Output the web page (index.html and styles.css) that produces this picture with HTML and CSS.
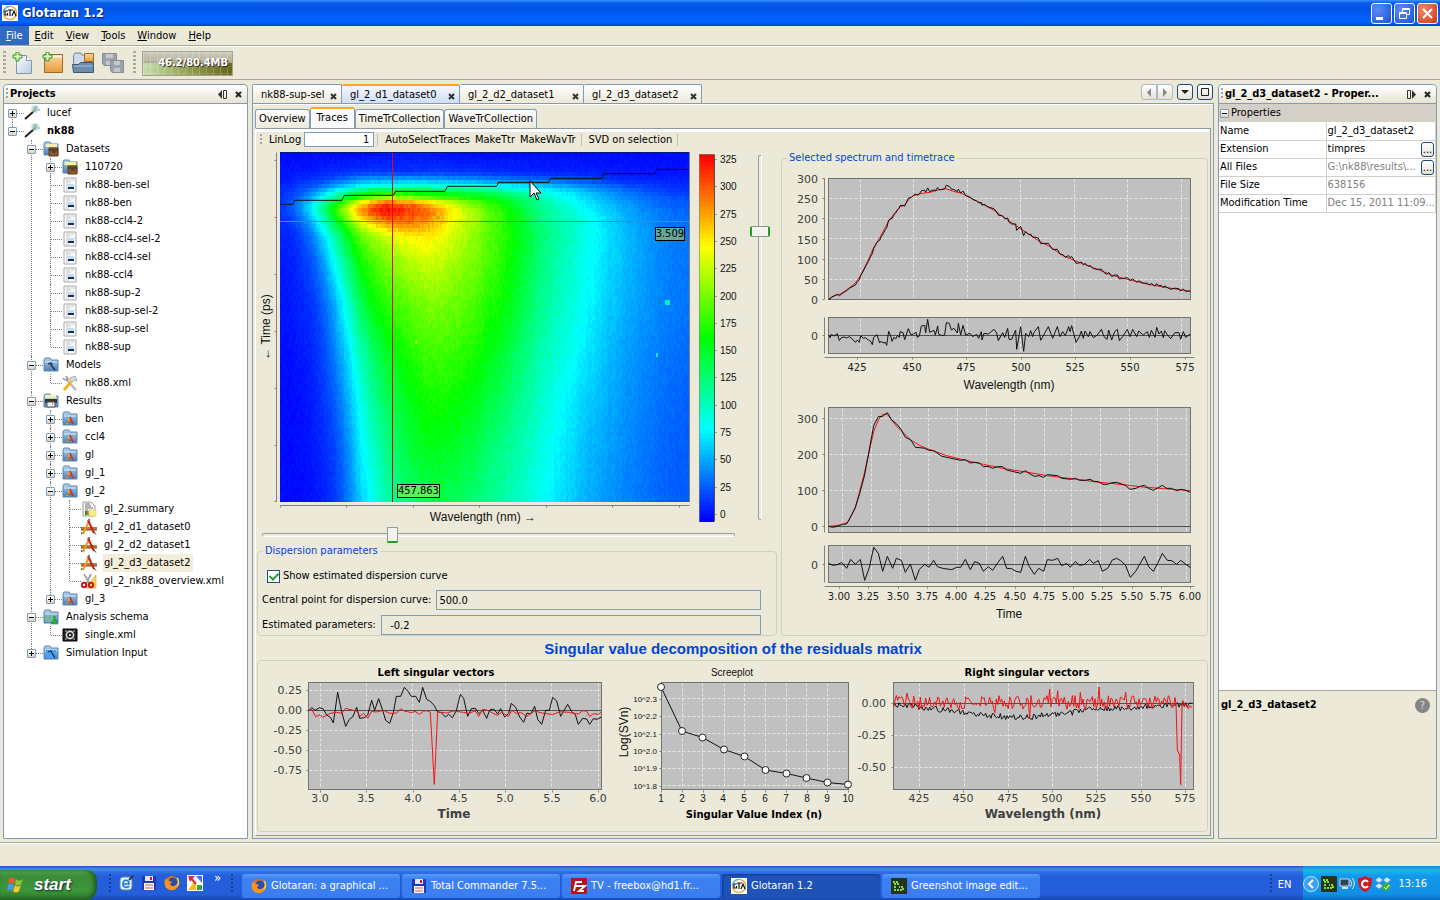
FILE: index.html
```html
<!DOCTYPE html>
<html lang="en">
<head>
    <meta charset="UTF-8">
    <meta name="viewport" content="width=device-width, initial-scale=1.0">
    <title>Glotaran 1.2</title>
    <link rel="stylesheet" href="styles.css">
</head>
<body>
    <!-- Icons shared by the tree, the toolbar and the taskbar -->
    <svg class="defs" width="0" height="0" aria-hidden="true">
        <defs>
            <linearGradient id="g-folder" x1="0" y1="0" x2="0" y2="1"><stop offset="0" stop-color="#b4d2ee"/><stop offset="1" stop-color="#4a7fb5"/></linearGradient>
            <radialGradient id="g-glow"><stop offset="0" stop-color="#f9a8e8"/><stop offset=".5" stop-color="#a8e8b8"/><stop offset="1" stop-color="#b8c8ff" stop-opacity="0"/></radialGradient>
            <linearGradient id="g-orange" x1="0" y1="0" x2="0" y2="1"><stop offset="0" stop-color="#fbd9a2"/><stop offset="1" stop-color="#e89a3c"/></linearGradient>
            <linearGradient id="g-page" x1="0" y1="0" x2="1" y2="1"><stop offset="0" stop-color="#fff"/><stop offset="1" stop-color="#b9cbdd"/></linearGradient>
        </defs>
        <symbol id="i-wand" viewBox="0 0 16 16"><circle cx="11" cy="4" r="5" fill="url(#g-glow)"/><path d="M1 14 9 7" stroke="#222" stroke-width="2"/><path d="m9 7 3-3" stroke="#999" stroke-width="2"/><path d="M12 1v2M14 5h2M10 2l1 1" stroke="#6ad"/></symbol>
        <symbol id="i-base" viewBox="0 0 16 16"><path d="M1 3 2 1h5l1 2h7v11H1z" fill="url(#g-folder)" stroke="#5b87b3"/><path d="M2 5h12" stroke="#d5e6f6"/></symbol>
        <symbol id="i-data" viewBox="0 0 16 16"><use href="#i-base"/><path d="M3 3h11v3H3z" fill="#f5eeb0"/><path d="M6 7h9v8H6z" fill="#8a5a32" stroke="#5e3818"/><path d="M6 9h9M9 11h4" stroke="#3d2410"/></symbol>
        <symbol id="i-models" viewBox="0 0 16 16"><use href="#i-base"/><path d="m5 7 3-1 1 1-1 1 4 5" stroke="#234" stroke-width="1.4" fill="none"/></symbol>
        <symbol id="i-results" viewBox="0 0 16 16"><use href="#i-base"/><path d="M2 2h11v3H2z" fill="#f5eeb0"/><path d="M2 6h12v4H2z" fill="#333"/><path d="M4 9h8v5H4z" fill="#eee" stroke="#555"/><path d="M9 11h1" stroke="#e22"/></symbol>
        <symbol id="i-result" viewBox="0 0 16 16"><use href="#i-base"/><path d="m5 13 3-6" stroke="#f6a21c" stroke-width="1.6"/><path d="m8 6 3 7" stroke="#d22" stroke-width="1.6"/><path d="M5 11h6" stroke="#a52"/></symbol>
        <symbol id="i-schema" viewBox="0 0 16 16"><use href="#i-base"/><path d="M2 6h7l3 3v4H2z" fill="#76b7a0"/><path d="M12 7v3l3 5H8l3-5V7z" fill="#25b43a" stroke="#188a28" stroke-width=".6"/></symbol>
        <symbol id="i-sim" viewBox="0 0 16 16"><use href="#i-base"/><path d="M3 5h10v8H3z" fill="#4aa0f4"/><path d="m5 7 3-1 1 2 3 5" stroke="#134" stroke-width="1.3" fill="none"/></symbol>
        <symbol id="i-file" viewBox="0 0 16 16"><path d="M2 1h12v14H2z" fill="#fafafa" stroke="#a8a8a8"/><path d="M4 3h4M9 3h3M4 5h5M4 7h2M4 9h2M4 11h2M4 13h3" stroke="#c4c4c4"/><path d="M6 7h6v5H6z" fill="#bcdcf8"/><path d="M6 10h6v2H6z" fill="#10305a"/></symbol>
        <symbol id="i-tools" viewBox="0 0 16 16"><path d="m4 4 10 11" stroke="#b5b5b5" stroke-width="2.4"/><path d="M1 3c2 3 3 2 5 1L4 1" stroke="#999" stroke-width="1.6" fill="none"/><path d="m2 15 7-8" stroke="#f0b428" stroke-width="3"/><path d="m8 3 5-2 2 5-2-1-3 2-2-2z" fill="#ddd" stroke="#888" stroke-width=".7"/></symbol>
        <symbol id="i-summary" viewBox="0 0 16 16"><path d="M2 1h8l4 4v10H2z" fill="#f4f4f4" stroke="#999"/><path d="M4 3h5M4 5h6M4 7h8M4 9h3" stroke="#777"/><path d="M4 10h4v4H4z" fill="#e07818"/><path d="M4 10h2v4H4z" fill="#298a30"/><path d="M8 9h7v6H8z" fill="#fbf08a" stroke="#d8c850" stroke-width=".6"/></symbol>
        <symbol id="i-plot" viewBox="0 0 16 16"><path d="M0 8h16v3H0z" fill="#b27a3c"/><path d="M0 11h16" stroke="#7e5122"/><path d="m8 2-6 13" stroke="#f19a1b" stroke-width="2"/><path d="m7 1 6 13" stroke="#c81e1e" stroke-width="2"/><path d="m1 13-.5 2M13 13l2 2.5" stroke="#333"/><path d="M7 1h2" stroke="#777" stroke-width="2"/></symbol>
        <symbol id="i-cut" viewBox="0 0 16 16"><path d="M15 2v13H5z" fill="#f8d95a" stroke="#d0a520" stroke-width=".7"/><path d="M3 1 9 11M10 1 5 11" stroke="#aaa" stroke-width="2"/><circle cx="3" cy="12" r="2.2" fill="none" stroke="#d01818" stroke-width="2"/><circle cx="10" cy="12" r="2.2" fill="none" stroke="#d01818" stroke-width="2"/></symbol>
        <symbol id="i-single" viewBox="0 0 16 16"><path d="M1 2h14v12H1z" fill="#222" stroke="#000"/><circle cx="8" cy="8" r="3.6" fill="none" stroke="#ddd" stroke-width="1.6"/><circle cx="8" cy="8" r="1" fill="#fff"/><path d="M3 4h2M11 4h2M3 12h2M11 12h2" stroke="#bbb"/></symbol>
        <symbol id="i-glo" viewBox="0 0 16 16"><path d="M0 0h16v16H0z" fill="#fff"/><circle cx="8" cy="8" r="6.6" fill="none" stroke="#e8a83c" stroke-width="1.4"/><path d="M8 1.4A6.6 6.6 0 0 0 1.4 8" stroke="#5ab4d8" stroke-width="1.4" fill="none"/><path d="M6 6H3v4h2.500V8M6 5h5M8 5v6M10 11l2-5 2 5" stroke="#111" stroke-width="1.2" fill="none"/></symbol>
        <symbol id="i-fox" viewBox="0 0 16 16"><circle cx="8" cy="8" r="7" fill="#e8701a"/><circle cx="9" cy="7" r="4.500" fill="#2b4fa8"/><path d="M1 4c1 0 3 1 4 2l3 1-2 2c1 3 5 3 8-1 1 5-4 8-8 7C1 14 0 9 1 4z" fill="#f89420"/><path d="M13 3c2 2 2 6 0 8" stroke="#fbd23c" fill="none" stroke-width="1.5"/></symbol>
        <symbol id="i-disk" viewBox="0 0 16 16"><path d="M1 1h14v14H1z" fill="#2038b8"/><path d="M4 1h8v5H4z" fill="#dfe6f8"/><path d="M9 2h2v3H9z" fill="#c81e28"/><path d="M3 8h10v7H3z" fill="#fff"/><path d="M4 10h8M4 13h8" stroke="#e04848"/></symbol>
        <symbol id="i-fz" viewBox="0 0 16 16"><path d="M0 0h16v16H0z" fill="#b5121b"/><path d="m3 13 2-9h6M4 8h5M9 8h5l-6 5h5" stroke="#fff" stroke-width="1.8" fill="none"/></symbol>
        <symbol id="i-shot" viewBox="0 0 16 16"><path d="M0 0h16v16H0z" fill="#26331f"/><path d="M2 4h5v2H4v6h8V9H8" stroke="#7fe03a" stroke-width="2" fill="none" stroke-dasharray="2 1"/></symbol>
        <symbol id="i-ie" viewBox="0 0 16 16"><rect x="2" y="2" width="12" height="13" rx="3" fill="#e8f2fc" stroke="#58a"/><path d="M5 9h6c0-5-6-5-6 0 0 4 5 4 6 2" stroke="#1a78d8" stroke-width="1.7" fill="none"/><path d="m11 5 4-4" stroke="#333" stroke-width="2"/></symbol>
        <symbol id="i-quad" viewBox="0 0 16 16"><path d="M0 0h16v16H0z" fill="#fff"/><path d="M1 1h7L3 7z" fill="#d82878"/><path d="M9 1h6v7z" fill="#3b70e8"/><path d="m1 15 6-8 2 3v5z" fill="#f0c020"/><path d="M10 10h5v5h-5z" fill="#2fa838"/><path d="m3 2 6 7" stroke="#e02828" stroke-width="2"/></symbol>
    </svg>

    <header class="titlebar">
        <svg class="icon"><use href="#i-glo"/></svg>
        <h1>Glotaran 1.2</h1>
        <div class="win-buttons">
            <button class="win-button" aria-label="Minimize"><svg width="19" height="19"><path d="M4 13h7v3H4z" fill="#fff"/></svg></button>
            <button class="win-button" aria-label="Restore"><svg width="19" height="19" fill="none" stroke="#fff"><path d="M4.500 8.500h7v6h-7zM4 9.500h8M7.500 8V4.500h7v6H12M7 5.500h8"/></svg></button>
            <button class="win-button close" aria-label="Close"><svg width="19" height="19" stroke="#fff" stroke-width="2"><path d="m5 5 9 9M14 5l-9 9"/></svg></button>
        </div>
    </header>

    <nav class="menubar">
        <button class="active"><u>F</u>ile</button>
        <button><u>E</u>dit</button>
        <button><u>V</u>iew</button>
        <button><u>T</u>ools</button>
        <button><u>W</u>indow</button>
        <button><u>H</u>elp</button>
    </nav>

    <div class="toolbar">
        <i class="grip"></i>
        <button class="tool" aria-label="New file"><svg width="22" height="22"><path d="M4.500 3.500h10l5 5v13h-15z" fill="url(#g-page)" stroke="#8298ae"/><path d="M14.500 3.500v5h5" fill="#fff" stroke="#8298ae"/><path d="M4 0h3v3h3v3H7v3H4V6H1V3h3z" fill="#dff7c4" stroke="#2b9a1a"/></svg></button>
        <button class="tool" aria-label="New project"><svg width="22" height="22"><path d="M2.500 2.500h18v18h-18z" fill="url(#g-orange)" stroke="#a06a28"/><path d="M3 4.500h17" stroke="#fff3de" stroke-width="2"/><path d="M4 0h3v3h3v3H7v3H4V6H1V3h3z" fill="#dff7c4" stroke="#2b9a1a"/></svg></button>
        <button class="tool" aria-label="Open project"><svg width="22" height="22"><path d="M1.500 3.500 3 1h6l1 2h3v10H1.500z" fill="#cddbe9" stroke="#6a84a0"/><path d="M12.500 1.500h9v8h-9z" fill="url(#g-orange)" stroke="#a06a28"/><path d="M.500 12.500h6l2-2h13v10h-20z" fill="#6b8cad" stroke="#3c5875"/><path d="M1.500 14h19" stroke="#a9c0d8"/></svg></button>
        <button class="tool" aria-label="Save all" disabled><svg width="22" height="22"><path d="M.500 1.500h14v12H2l-1.500-2z" fill="#9ba3ae" stroke="#868e98"/><path d="M4 2h7v4H4zM4 9h7v4H4z" fill="#c3c8cc"/><path d="M8.500 8.500h13v12H10l-1.500-2z" fill="#9ba3ae" stroke="#868e98"/><path d="M12 9h6v4h-6zM12 16h6v4h-6z" fill="#c3c8cc"/></svg></button>
        <i class="grip"></i>
        <button class="memory">46.2/80.4MB</button>
    </div>

    <main class="workspace">
        <!-- Projects tree -->
        <section class="window projects">
            <header class="window-head">
                <i class="grip small"></i>
                <h2>Projects</h2>
                <button class="mini" aria-label="Slide out"><svg width="9" height="9"><path d="M4 0v9L0 4.500z" fill="#333"/><path d="M5.500.500h3v8h-3z" fill="none" stroke="#333"/></svg></button>
                <button class="mini" aria-label="Close"><svg width="7" height="7"><path d="m1 1 5 5M6 1 1 6" stroke="#222" stroke-width="2"/></svg></button>
            </header>
            <ul class="tree">
                <li><div class="node"><button class="toggle plus"></button><svg class="icon"><use href="#i-wand"/></svg><span>lucef</span></div></li>
                <li><div class="node"><button class="toggle"></button><svg class="icon"><use href="#i-wand"/></svg><b>nk88</b></div>
                    <ul>
                        <li><div class="node"><button class="toggle"></button><svg class="icon"><use href="#i-data"/></svg><span>Datasets</span></div>
                            <ul>
                                <li><div class="node"><button class="toggle plus"></button><svg class="icon"><use href="#i-data"/></svg><span>110720</span></div></li>
                                <li><div class="node leaf"><svg class="icon"><use href="#i-file"/></svg><span>nk88-ben-sel</span></div></li>
                                <li><div class="node leaf"><svg class="icon"><use href="#i-file"/></svg><span>nk88-ben</span></div></li>
                                <li><div class="node leaf"><svg class="icon"><use href="#i-file"/></svg><span>nk88-ccl4-2</span></div></li>
                                <li><div class="node leaf"><svg class="icon"><use href="#i-file"/></svg><span>nk88-ccl4-sel-2</span></div></li>
                                <li><div class="node leaf"><svg class="icon"><use href="#i-file"/></svg><span>nk88-ccl4-sel</span></div></li>
                                <li><div class="node leaf"><svg class="icon"><use href="#i-file"/></svg><span>nk88-ccl4</span></div></li>
                                <li><div class="node leaf"><svg class="icon"><use href="#i-file"/></svg><span>nk88-sup-2</span></div></li>
                                <li><div class="node leaf"><svg class="icon"><use href="#i-file"/></svg><span>nk88-sup-sel-2</span></div></li>
                                <li><div class="node leaf"><svg class="icon"><use href="#i-file"/></svg><span>nk88-sup-sel</span></div></li>
                                <li><div class="node leaf"><svg class="icon"><use href="#i-file"/></svg><span>nk88-sup</span></div></li>
                            </ul>
                        </li>
                        <li><div class="node"><button class="toggle"></button><svg class="icon"><use href="#i-models"/></svg><span>Models</span></div>
                            <ul>
                                <li><div class="node leaf"><svg class="icon"><use href="#i-tools"/></svg><span>nk88.xml</span></div></li>
                            </ul>
                        </li>
                        <li><div class="node"><button class="toggle"></button><svg class="icon"><use href="#i-results"/></svg><span>Results</span></div>
                            <ul>
                                <li><div class="node"><button class="toggle plus"></button><svg class="icon"><use href="#i-result"/></svg><span>ben</span></div></li>
                                <li><div class="node"><button class="toggle plus"></button><svg class="icon"><use href="#i-result"/></svg><span>ccl4</span></div></li>
                                <li><div class="node"><button class="toggle plus"></button><svg class="icon"><use href="#i-result"/></svg><span>gl</span></div></li>
                                <li><div class="node"><button class="toggle plus"></button><svg class="icon"><use href="#i-result"/></svg><span>gl_1</span></div></li>
                                <li><div class="node"><button class="toggle"></button><svg class="icon"><use href="#i-result"/></svg><span>gl_2</span></div>
                                    <ul>
                                        <li><div class="node leaf"><svg class="icon"><use href="#i-summary"/></svg><span>gl_2.summary</span></div></li>
                                        <li><div class="node leaf"><svg class="icon"><use href="#i-plot"/></svg><span>gl_2_d1_dataset0</span></div></li>
                                        <li><div class="node leaf"><svg class="icon"><use href="#i-plot"/></svg><span>gl_2_d2_dataset1</span></div></li>
                                        <li><div class="node leaf selected"><svg class="icon"><use href="#i-plot"/></svg><span>gl_2_d3_dataset2</span></div></li>
                                        <li><div class="node leaf"><svg class="icon"><use href="#i-cut"/></svg><span>gl_2_nk88_overview.xml</span></div></li>
                                    </ul>
                                </li>
                                <li><div class="node"><button class="toggle plus"></button><svg class="icon"><use href="#i-result"/></svg><span>gl_3</span></div></li>
                            </ul>
                        </li>
                        <li><div class="node"><button class="toggle"></button><svg class="icon"><use href="#i-schema"/></svg><span>Analysis schema</span></div>
                            <ul>
                                <li><div class="node leaf"><svg class="icon"><use href="#i-single"/></svg><span>single.xml</span></div></li>
                            </ul>
                        </li>
                        <li><div class="node"><button class="toggle plus"></button><svg class="icon"><use href="#i-sim"/></svg><span>Simulation Input</span></div></li>
                    </ul>
                </li>
            </ul>
        </section>

        <!-- Editor area -->
        <section class="editor">
            <div class="doc-tabs">
                <button class="doc-tab first">nk88-sup-sel <svg width="7" height="7"><path d="m1 1 5 5M6 1 1 6"/></svg></button>
                <button class="doc-tab active">gl_2_d1_dataset0 <svg width="7" height="7"><path d="m1 1 5 5M6 1 1 6"/></svg></button>
                <button class="doc-tab wide">gl_2_d2_dataset1 <svg width="7" height="7"><path d="m1 1 5 5M6 1 1 6"/></svg></button>
                <button class="doc-tab">gl_2_d3_dataset2 <svg width="7" height="7"><path d="m1 1 5 5M6 1 1 6"/></svg></button>
                <div class="doc-nav">
                    <button class="nav-button off prev" aria-label="Previous"><svg width="14" height="14"><path d="M9 3v9L5 7.500z" fill="#888"/></svg></button>
                    <button class="nav-button off next" aria-label="Next"><svg width="14" height="14"><path d="M5 3v9l4-4.500z" fill="#888"/></svg></button>
                    <button class="nav-button" aria-label="List"><svg width="14" height="14"><path d="M3 5h8l-4 4z" fill="#222"/></svg></button>
                    <button class="nav-button" aria-label="Maximize"><svg width="14" height="14"><path d="M3.500 3.500h7v7h-7z" fill="none" stroke="#222"/></svg></button>
                </div>
            </div>
            <div class="doc">
                <div class="inner-tabs">
                    <button>Overview</button>
                    <button class="active">Traces</button>
                    <button>TimeTrCollection</button>
                    <button>WaveTrCollection</button>
                </div>
                <div class="pane">
                    <div class="trace-bar">
                        <i class="grip small"></i>
                        <label for="linlog">LinLog</label>
                        <input id="linlog" type="text" value="1">
                        <i class="sep"></i>
                        <button>AutoSelectTraces</button>
                        <button>MakeTtr</button>
                        <button>MakeWavTr</button>
                        <i class="sep"></i>
                        <button>SVD on selection</button>
                        <i class="sep"></i>
                    </div>

                    <div class="columns">
                        <div class="left">
                            <div class="heat">
                                <svg class="heat-y" viewBox="0 0 24 350" id="heat-y"></svg>
                                <div class="heat-plot">
                                    <canvas id="heatmap" width="409" height="350"></canvas>
                                    <svg class="overlay" viewBox="0 0 409 350" preserveAspectRatio="none" id="heat-lines"></svg>
                                    <span class="marker time">3.509</span>
                                    <span class="marker wave">457.863</span>
                                    <svg class="cursor" width="13" height="21"><path d="M1 1v16l4-4 3 7 2-1-3-6h5z" fill="#fff" stroke="#000"/></svg>
                                </div>
                                <svg class="heat-x" viewBox="0 0 410 24" id="heat-x"></svg>
                                <svg class="colorbar" viewBox="0 0 60 374" id="colorbar"></svg>
                                <input class="range-v" type="range" min="0" max="100" value="20" aria-label="Time">
                            </div>
                            <input class="range-h" type="range" min="0" max="100" value="27" aria-label="Wavelength">
                            <fieldset class="dispersion">
                                <legend>Dispersion parameters</legend>
                                <div class="row check">
                                    <input type="checkbox" id="show-curve" checked>
                                    <label for="show-curve">Show estimated dispersion curve</label>
                                </div>
                                <div class="row">
                                    <label for="central">Central point for dispersion curve:</label>
                                    <input type="text" id="central" value="500.0">
                                </div>
                                <div class="row">
                                    <label for="estimated">Estimated parameters:</label>
                                    <input type="text" id="estimated" value="  -0.2">
                                </div>
                            </fieldset>
                        </div>
                        <fieldset class="selected-traces">
                            <legend>Selected spectrum and timetrace</legend>
                            <svg class="chart" viewBox="0 0 425 230" id="spectrum"></svg>
                            <svg class="chart" viewBox="0 0 425 230" id="timetrace"></svg>
                        </fieldset>
                    </div>

                    <h3>Singular value decomposition of the residuals matrix</h3>
                    <div class="svd">
                        <svg class="chart" viewBox="0 0 356 168" id="left-svd"></svg>
                        <svg class="chart" viewBox="0 0 240 168" id="scree"></svg>
                        <svg class="chart" viewBox="0 0 353 168" id="right-svd"></svg>
                    </div>
                </div>
            </div>
        </section>

        <!-- Properties -->
        <section class="window properties">
            <header class="window-head">
                <i class="grip small"></i>
                <h2>gl_2_d3_dataset2 - Proper...</h2>
                <button class="mini" aria-label="Slide out"><svg width="9" height="9"><path d="M5 0v9l4-4.500z" fill="#333"/><path d="M.500.500h3v8h-3z" fill="none" stroke="#333"/></svg></button>
                <button class="mini" aria-label="Close"><svg width="7" height="7"><path d="m1 1 5 5M6 1 1 6" stroke="#222" stroke-width="2"/></svg></button>
            </header>
            <div class="prop-group"><button class="toggle"></button>Properties</div>
            <table>
                <tr><th>Name</th><td>gl_2_d3_dataset2</td></tr>
                <tr><th>Extension</th><td>timpres<button class="more">...</button></td></tr>
                <tr class="muted"><th>All Files</th><td>G:\nk88\results\...<button class="more">...</button></td></tr>
                <tr class="muted"><th>File Size</th><td>638156</td></tr>
                <tr class="muted"><th>Modification Time</th><td>Dec 15, 2011 11:09...</td></tr>
            </table>
            <div class="description"><b>gl_2_d3_dataset2</b><button class="help" aria-label="Help">?</button></div>
        </section>
    </main>

    <div class="statusbar"></div>

    <footer class="taskbar">
        <button class="start"><svg width="20" height="20"><path d="M3 4c2-2 4-2 6 0L8 9C6 7 4 7 2 9z" fill="#f0582a"/><path d="M10 4c2 2 4 2 7 0l-2 5c-2 2-4 2-6 0z" fill="#8cc63e"/><path d="M2 10c2-2 4-2 6 0l-2 6c-1-2-4-2-5 0z" fill="#4a9bf0"/><path d="M9 10c2 2 4 2 6 0l-2 6c-2 2-4 2-6 0z" fill="#fbc52c"/></svg>start</button>
        <div class="quick">
            <i class="dots"></i>
            <svg class="icon"><use href="#i-ie"/></svg>
            <svg class="icon"><use href="#i-disk"/></svg>
            <svg class="icon"><use href="#i-fox"/></svg>
            <svg class="icon"><use href="#i-quad"/></svg>
            <span class="chevron">»</span>
            <i class="dots"></i>
        </div>
        <div class="tasks">
            <button class="task"><svg class="icon"><use href="#i-fox"/></svg>Glotaran: a graphical ...</button>
            <button class="task"><svg class="icon"><use href="#i-disk"/></svg>Total Commander 7.5...</button>
            <button class="task"><svg class="icon"><use href="#i-fz"/></svg>TV - freebox@hd1.fr...</button>
            <button class="task active"><svg class="icon"><use href="#i-glo"/></svg>Glotaran 1.2</button>
            <button class="task"><svg class="icon"><use href="#i-shot"/></svg>Greenshot image edit...</button>
        </div>
        <i class="dots"></i>
        <span class="lang">EN</span>
        <div class="tray">
            <svg class="icon" viewBox="0 0 16 16"><circle cx="8" cy="8" r="7.500" fill="#3aa0f4" stroke="#bfe2ff"/><path d="M10 4 6 8l4 4" stroke="#fff" stroke-width="2" fill="none"/></svg>
            <svg class="icon"><use href="#i-shot"/></svg>
            <svg class="icon" viewBox="0 0 16 16"><path d="M1 3h9v7H1z" fill="#345" stroke="#cde"/><path d="M3 12h6" stroke="#dde" stroke-width="2"/><path d="M11 4c2 2 2 5 0 7M13 2c3 3 3 8 0 11" stroke="#eee" fill="none"/></svg>
            <svg class="icon" viewBox="0 0 16 16"><path d="M1 2c4 0 5-1 7-2 2 1 3 2 7 2 0 8-2 12-7 14C3 14 1 10 1 2z" fill="#d41820"/><path d="M11 6c-2-3-6-1-6 2s4 5 6 2" stroke="#fff" stroke-width="2" fill="none"/></svg>
            <svg class="icon" viewBox="0 0 16 16"><path d="m4 1 4 3-4 3-4-3zM12 1l4 3-4 3-4-3zM4 7l4 3-4 3-4-3zM12 7l4 3-4 3-4-3z" fill="#cfe9ff" stroke="#3a8cd8" stroke-width=".6"/><circle cx="11" cy="11" r="4" fill="#3fae3c"/><path d="m9 11 2 2 3-4" stroke="#fff" fill="none"/></svg>
            <span class="clock">13:16</span>
        </div>
    </footer>

    <script src="plots.js"></script>
</body>
</html>
```
FILE: styles.css
```css
* {
    box-sizing: border-box;
}
body {
    margin: 0;
    min-height: 100vh;
    display: flex;
    flex-direction: column;
    background: #ece9d8;
    color: #000;
    font: 11px/14px "DejaVu Sans Condensed", "DejaVu Sans", sans-serif;
}
button, input {
    font: inherit;
    color: inherit;
    margin: 0;
}
button {
    background: none;
    border: none;
    padding: 0;
    white-space: nowrap;
}
h1, h2, h3, ul {
    margin: 0;
    padding: 0;
}
.defs {
    position: absolute;
}
.icon {
    width: 16px;
    height: 16px;
    flex: none;
}
.grip {
    width: 3px;
    height: 24px;
    background: repeating-linear-gradient(#aaa799 0 2px, transparent 2px 4px);
}
.grip.small {
    width: 2px;
    height: 12px;
}

/* Title bar */
.titlebar {
    height: 26px;
    display: flex;
    align-items: center;
    padding: 0 2px;
    background: linear-gradient(#3b92ff 0, #0a5ceb 3px, #0054e3 8px, #0360fd 18px, #0265ff 22px, #003dd7 26px);
}
.titlebar h1 {
    flex: 1;
    margin-left: 4px;
    color: #fff;
    font-size: 13px;
    text-shadow: 1px 1px 1px #0a246a;
}
.win-buttons {
    display: flex;
    gap: 2px;
}
.win-button {
    width: 21px;
    height: 21px;
    border: 1px solid #fff;
    border-radius: 3px;
    background: radial-gradient(circle at 30% 30%, #5b8cf5, #1c52d8);
}
.win-button.close {
    background: radial-gradient(circle at 30% 30%, #f08a6c, #cf3712);
}
.win-button svg {
    display: block;
}

/* Menu and tool bar */
.menubar {
    height: 20px;
    display: flex;
    border-bottom: 1px solid #aca899;
}
.menubar button {
    height: 19px;
    padding: 0 6px;
}
.menubar button.active {
    background: #316ac5;
    color: #fff;
}
.toolbar {
    height: 34px;
    display: flex;
    align-items: center;
    padding: 0 3px;
    border-top: 1px solid #fff;
    border-bottom: 1px solid #aca899;
}
.tool {
    width: 22px;
    height: 22px;
    margin-left: 8px;
}
.tool:first-of-type {
    margin-left: 6px;
}
.tool svg {
    display: block;
}
.toolbar .grip + .memory {
    margin-left: 6px;
}
.tool + .grip {
    margin-left: 9px;
}
.memory {
    width: 91px;
    height: 25px;
    padding-right: 4px;
    text-align: right;
    color: #fff;
    font-weight: bold;
    text-shadow: 1px 1px 1px #222;
    border: 1px solid #a5a294;
    background:
        linear-gradient(#fff2 1px, transparent 1px) 0 0 / 7px 7px,
        linear-gradient(90deg, #fff3 1px, transparent 1px) 0 0 / 7px 7px,
        linear-gradient(#d0cdbc 0, #aeac98 11px, transparent 11px),
        linear-gradient(90deg, #c9deb0, #92a052 50%, #66661c);
}

/* Docked windows */
.workspace {
    flex: 1;
    display: grid;
    grid-template-columns: 245px minmax(0, 1fr) 219px;
    gap: 4px;
    padding: 4px 3px 3px;
}
.window {
    display: flex;
    flex-direction: column;
    background: #fff;
    border: 1px solid #7f9db9;
    border-radius: 4px 4px 0 0;
}
.window-head {
    height: 19px;
    flex: none;
    display: flex;
    align-items: center;
    padding: 0 5px 0 2px;
    border-bottom: 1px solid #7f9db9;
    border-radius: 4px 4px 0 0;
    background: linear-gradient(#fff, #e7e4d4);
}
.window-head h2 {
    flex: 1;
    margin-left: 2px;
    font-size: 11px;
    white-space: nowrap;
}
.mini {
    height: 9px;
    margin-left: 8px;
    display: flex;
    align-items: center;
}

/* Tree */
.tree ul {
    margin-left: 19px;
}
.tree li {
    list-style: none;
    position: relative;
}
.tree li::before {
    content: "";
    position: absolute;
    left: 8px;
    top: 0;
    bottom: 0;
    border-left: 1px dotted #808080;
}
.tree > li:first-child::before {
    top: 9px;
}
.tree li:last-child::before {
    bottom: auto;
    height: 9px;
}
.node {
    height: 18px;
    display: flex;
    align-items: center;
    padding-left: 4px;
    position: relative;
}
.node::before {
    content: "";
    width: 7px;
    order: 1;
    border-top: 1px dotted #808080;
}
.node .icon {
    order: 2;
}
.node span, .node b {
    order: 3;
    margin-left: 6px;
    padding: 2px 3px 2px 1px;
    white-space: nowrap;
}
.leaf {
    padding-left: 9px;
}
.leaf::before {
    width: 11px;
}
.selected span {
    background: #f3eed9;
}
.toggle {
    width: 9px;
    height: 9px;
    flex: none;
    border: 1px solid #7f9db9;
    border-radius: 1px;
    background: linear-gradient(#000, #000) center / 5px 1px no-repeat, linear-gradient(#fff, #d8d4c4);
}
.toggle.plus {
    background: linear-gradient(#000, #000) center / 5px 1px no-repeat, linear-gradient(#000, #000) center / 1px 5px no-repeat, linear-gradient(#fff, #d8d4c4);
}

/* Editor */
.editor {
    display: flex;
    flex-direction: column;
}
.doc-tabs {
    height: 19px;
    display: flex;
}
.doc-tab {
    width: 118px;
    display: flex;
    align-items: center;
    justify-content: space-between;
    padding: 1px 4px 0 8px;
    border: 1px solid #7f9db9;
    border-left: none;
    border-bottom: none;
    border-radius: 2px 2px 0 0;
    background: linear-gradient(#fff, #ece9d8);
}
.doc-tab.first {
    width: 90px;
    border-left: 1px solid #7f9db9;
}
.doc-tab.wide {
    width: 124px;
}
.doc-tab.active {
    border-top: 2px solid #ffa51c;
    padding-top: 0;
    background: linear-gradient(#f4f7fe, #d2def5);
}
.doc-tab svg {
    margin-top: 3px;
    stroke: #333;
    stroke-width: 2;
}
.doc-nav {
    margin-left: auto;
    padding-right: 1px;
    display: flex;
}
.nav-button {
    width: 16px;
    height: 16px;
    margin-left: 4px;
    border: 1px solid #1c4a7c;
    border-radius: 3px;
    background: linear-gradient(#fff, #e6e2d2);
}
.nav-button.off {
    border-color: #a5b8cc;
}
.nav-button.prev {
    border-radius: 3px 0 0 3px;
}
.nav-button.next {
    margin-left: 0;
    border-radius: 0 3px 3px 0;
}
.nav-button svg {
    display: block;
}
.doc {
    flex: 1;
    display: flex;
    flex-direction: column;
    padding: 3px 2px 2px;
    border: 1px solid #7f9db9;
    box-shadow: inset 0 1px #fff;
}
.inner-tabs {
    height: 21px;
    display: flex;
    align-items: flex-end;
}
.inner-tabs button {
    height: 19px;
    padding: 0 3px;
    border: 1px solid #7f9db9;
    border-bottom: none;
    border-radius: 3px 3px 0 0;
    background: linear-gradient(#fff, #ece9d8);
}
.inner-tabs button.active {
    height: 21px;
    padding: 0 6px 2px;
    border-top: 2px solid #ffa51c;
    background: #fcfcfe;
}
.pane {
    flex: 1;
    border: 1px solid #919b9c;
    border-left-color: #fff;
    box-shadow: inset 0 3px #fcfcfe;
    padding-top: 3px;
}
.trace-bar {
    height: 19px;
    display: flex;
    align-items: center;
    padding: 0 0 4px 4px;
}
.trace-bar label {
    margin: 0 3px 0 7px;
}
.trace-bar input {
    width: 70px;
    height: 15px;
    padding: 0 4px;
    text-align: right;
    border: 1px solid #7f9db9;
}
.trace-bar button {
    margin-right: 5px;
}
.sep {
    width: 1px;
    height: 12px;
    margin: 0 7px 0 3px;
    background: #c5c2b2;
}
.trace-bar button + .sep {
    margin-left: 0;
}
.columns {
    display: grid;
    grid-template-columns: 522fr 427fr;
    gap: 3px;
    padding-right: 2px;
}
.heat {
    display: grid;
    grid-template-columns: 24px minmax(0, 1fr) 60px 20px;
    grid-template-rows: auto auto;
    padding: 1px 8px 0 0;
}
.heat svg, .chart {
    display: block;
    width: 100%;
}
.chart {
    overflow: visible;
}
.heat-plot {
    position: relative;
    border-right: 1px solid #808080;
}
.heat-plot canvas {
    display: block;
    width: 100%;
}
.heat-x {
    grid-column: 2;
    grid-row: 2;
}
.colorbar {
    grid-column: 3;
    grid-row: 1 / 3;
}
.heat .overlay {
    position: absolute;
    inset: 0;
    height: 100%;
}
.heat .cursor {
    position: absolute;
    left: 61%;
    top: 8%;
    width: 13px;
}
.marker {
    position: absolute;
    border: 1px solid #000;
    line-height: 12px;
    background: #66a898;
}
.marker.time {
    right: 4px;
    top: 75px;
}
.marker.wave {
    left: 117px;
    bottom: 4px;
    background: #5cf05c;
}
input[type="range"] {
    appearance: none;
    background: none;
    padding: 0;
    display: block;
}
.range-v {
    grid-column: 4;
    grid-row: 1 / 3;
    writing-mode: vertical-lr;
    width: 20px;
    height: auto;
    margin: 3px 0 6px;
}
.range-h {
    width: calc(100% - 49px);
    height: 16px;
    margin: 1px 0 0 6px;
}
.range-v::-webkit-slider-runnable-track {
    width: 4px;
    height: 100%;
    border: 1px solid #9d9c99;
    border-right-color: #fff;
    border-radius: 2px;
    background: #f0ede0;
}
.range-h::-webkit-slider-runnable-track {
    height: 4px;
    border: 1px solid #9d9c99;
    border-bottom-color: #fff;
    border-radius: 2px;
    background: #f0ede0;
}
.range-v::-webkit-slider-thumb {
    appearance: none;
    width: 20px;
    height: 11px;
    margin-left: -9px;
    border: 1px solid #8a9a8c;
    border-left: 2px solid #21a121;
    border-right: 2px solid #21a121;
    border-radius: 2px;
    background: #f3f3ef;
}
.range-h::-webkit-slider-thumb {
    appearance: none;
    width: 11px;
    height: 16px;
    margin-top: -7px;
    border: 1px solid #9a9a94;
    border-bottom: 2px solid #21a121;
    border-radius: 1px;
    background: #f3f3ef;
}
fieldset {
    min-width: 0;
    margin: 0;
    border: 1px solid #d0d0bf;
    border-radius: 4px;
}
legend {
    margin-left: 5px;
    padding: 0 2px;
    color: #0046d5;
}
.dispersion {
    margin: 1px 1px 0;
    padding: 0 15px 0 4px;
}
.dispersion legend {
    margin-left: 1px;
}
.row {
    height: 20px;
    display: flex;
    align-items: center;
    margin-bottom: 5px;
}
.row:last-child {
    margin-bottom: 0;
}
.row.check {
    height: 22px;
    margin: 7px 0 3px 5px;
}
.row input[type="text"] {
    flex: 1;
    height: 20px;
    margin-left: 5px;
    padding: 0 2px;
    border: 1px solid #7f9db9;
    background: #ece9d8;
    white-space: pre;
}
.row input[type="checkbox"] {
    appearance: none;
    width: 13px;
    height: 13px;
    margin-right: 3px;
    border: 1px solid #1c5180;
    background: #fff;
    display: grid;
    place-items: center;
}
.row input[type="checkbox"]:checked::before {
    content: "";
    width: 4px;
    height: 7px;
    margin-bottom: 2px;
    border: solid #21a121;
    border-width: 0 2px 2px 0;
    transform: rotate(45deg);
}
.selected-traces {
    padding: 1px 0 0;
}
h3 {
    padding: 5px 0 3px;
    text-align: center;
    color: #0046d5;
    font: bold 15px/16px "Liberation Sans", Arial, sans-serif;
}
.svd {
    display: grid;
    grid-template-columns: 356fr 240fr 353fr;
    margin: 0 2px 0 1px;
    padding-bottom: 2px;
    border: 1px solid #d0d0bf;
    border-radius: 4px;
}

/* Charts */
svg text {
    font: 11px "DejaVu Sans", sans-serif;
    fill: #404040;
}
svg text.small {
    font-size: 10px;
    fill: #222;
}
svg text.tiny {
    font: 10px "Liberation Sans", Arial, sans-serif;
    fill: #111;
}
svg text.power {
    font-size: 8px;
}
svg text.name {
    font: 12px "Liberation Sans", Arial, sans-serif;
    fill: #111;
}
svg text.title {
    font-size: 10px;
    font-weight: bold;
    fill: #000;
}
svg text.bold {
    font-size: 12px;
    font-weight: bold;
}
.plot {
    fill: #c0c0c0;
    stroke: #737370;
}
.grid {
    stroke: #e6e6e6;
    stroke-dasharray: 3 2;
}
.axis {
    stroke: #808080;
}
.zero {
    stroke: #505050;
}
.trace {
    fill: none;
    stroke: #111;
    vector-effect: non-scaling-stroke;
}
.trace.red {
    stroke: #f01414;
}
.dot {
    fill: #fff;
    stroke: #222;
}

/* Properties */
.prop-group {
    height: 18px;
    flex: none;
    display: flex;
    align-items: center;
    gap: 2px;
    padding-left: 1px;
    background: #d4d0c8;
}
.properties table {
    width: 100%;
    table-layout: fixed;
    border-collapse: collapse;
}
.properties th, .properties td {
    height: 18px;
    padding: 0 0 0 1px;
    text-align: left;
    font-weight: normal;
    white-space: nowrap;
    border-bottom: 1px solid #d4d0c8;
    border-right: 1px solid #d4d0c8;
}
.properties th {
    width: 107px;
}
.muted td {
    color: #808080;
}
.more {
    float: right;
    width: 13px;
    height: 15px;
    margin-right: 1px;
    line-height: 11px;
    color: #000;
    border: 1px solid #1c4a7c;
    border-radius: 3px;
    background: linear-gradient(#fff, #e6e2d2);
}
.description {
    height: 148px;
    margin-top: auto;
    display: flex;
    justify-content: space-between;
    padding: 7px 6px 0 2px;
    border-top: 1px solid #aca899;
    background: #ece9d8;
}
.help {
    width: 15px;
    height: 15px;
    border-radius: 50%;
    background: #858585;
    color: #ddd;
    line-height: 15px;
}

/* Bottom bars */
.statusbar {
    height: 24px;
    border-top: 1px solid #aca899;
    box-shadow: inset 0 1px #fff;
}
.taskbar {
    height: 34px;
    display: flex;
    align-items: stretch;
    color: #fff;
    background: linear-gradient(#1e4fc4 0, #3f8cf3 3px, #2f6fe4 6px, #245edb 10px, #245edb 28px, #1c47b0 34px);
}
.start {
    width: 97px;
    margin-top: 4px;
    display: flex;
    align-items: center;
    gap: 8px;
    padding: 0 0 0 6px;
    border-radius: 0 10px 12px 0;
    background: linear-gradient(#5eac56, #3c8c3a 20%, #3b9738 70%, #2c6e2a);
    box-shadow: inset -3px 0 4px #1d5a1c;
    font: italic bold 17px "Liberation Sans", Arial, sans-serif;
    text-shadow: 1px 1px 2px #123;
}
.quick {
    width: 145px;
    display: flex;
    align-items: center;
    gap: 7px;
    padding: 0 0 0 12px;
}
.dots {
    width: 2px;
    height: 18px;
    align-self: center;
    background: repeating-linear-gradient(#133d9c 0 2px, transparent 2px 4px);
}
.chevron {
    flex: 1;
    padding: 0 0 10px 4px;
    font-size: 13px;
}
.quick .dots:last-child {
    margin-right: 9px;
}
.tasks {
    flex: 1;
    display: flex;
    gap: 2px;
    padding: 8px 0 2px;
}
.task {
    width: 158px;
    display: flex;
    align-items: center;
    gap: 4px;
    padding-left: 9px;
    border-radius: 3px;
    background: linear-gradient(#5a9cf8, #3c81f3 20%, #3a7df0);
    overflow: hidden;
}
.task.active {
    background: #1e52b7;
    box-shadow: inset 1px 1px 2px #123a8c;
}
.lang {
    align-self: center;
    margin: 4px 12px 0 6px;
}
.tray {
    display: flex;
    align-items: center;
    gap: 2px;
    padding: 2px 13px 0 0;
    background: linear-gradient(#0d8ae0 0, #18b9f4 4px, #1299ea 10px, #1290e8 28px, #0a6cc4 34px);
}
.clock {
    margin-left: 5px;
}
```
FILE: plots.js
```js
const NS = 'http://www.w3.org/2000/svg';

function add(parent, tag, attrs, text) {
    const el = document.createElementNS(NS, tag);
    for (const key in attrs) el.setAttribute(key, attrs[key]);
    if (text !== undefined) el.textContent = text;
    parent.appendChild(el);
    return el;
}

function line(svg, cls, x1, y1, x2, y2) {
    add(svg, 'path', { class: cls, d: `M${x1 + .5} ${y1 + .5}L${x2 + .5} ${y2 + .5}` });
}

function label(svg, x, y, text, anchor, cls) {
    add(svg, 'text', { x, y, 'text-anchor': anchor, class: cls || '' }, text);
}

// Frame with a dashed grid; xs and ys are the grid positions
function plot(svg, x, y, w, h, xs, ys) {
    add(svg, 'rect', { class: 'plot', x: x + .5, y: y + .5, width: w, height: h });
    xs.forEach(gx => line(svg, 'grid', gx, y + 1, gx, y + h - 1));
    ys.forEach(gy => line(svg, 'grid', x + 1, gy, x + w - 1, gy));
}

// Points are stored at three units per pixel
function trace(svg, points, dx, dy, cls) {
    add(svg, 'polyline', {
        class: 'trace ' + (cls || ''),
        points,
        transform: `translate(${dx} ${dy}) scale(${1 / 3})`
    });
}

function vline(svg, x, y, text) {
    add(svg, 'text', { transform: `translate(${x} ${y}) rotate(-90)`, 'text-anchor': 'middle', class: 'name' }, text);
}

let seed = 7;
function rnd() {
    seed = (seed * 16807) % 2147483647;
    return seed / 2147483647;
}

function parse(str) {
    return str.split(' ').map(p => p.split(',').map(Number));
}

function lookup(pts, x) {
    for (let i = 1; i < pts.length; i++) {
        if (x <= pts[i][0]) {
            const t = (x - pts[i - 1][0]) / (pts[i][0] - pts[i - 1][0]);
            return pts[i - 1][1] + t * (pts[i][1] - pts[i - 1][1]);
        }
    }
    return pts[pts.length - 1][1];
}

// ---- Heat map ----
const cols = [0, 20, 40, 60, 80, 100, 120, 150, 180, 220, 260, 300, 340, 380, 410];
const rows = [
    [0, .01, .01, .01, .01, .01, .02, .02, .02, .01, .01, .01, .01, .01, .01, .01],
    [18, .02, .02, .03, .04, .05, .05, .05, .05, .05, .04, .03, .03, .02, .02, .02],
    [26, .02, .04, .06, .1, .15, .17, .17, .17, .15, .12, .1, .07, .04, .03, .03],
    [32, .03, .06, .1, .18, .25, .27, .28, .28, .27, .24, .2, .14, .08, .05, .04],
    [38, .04, .08, .17, .3, .42, .48, .47, .45, .42, .37, .27, .2, .12, .07, .05],
    [44, .04, .1, .24, .42, .56, .66, .66, .6, .54, .46, .32, .22, .14, .09, .07],
    [49, .04, .13, .32, .54, .76, .94, .9, .8, .65, .5, .35, .24, .16, .1, .08],
    [55, .04, .13, .34, .6, .86, 1, .97, .88, .7, .53, .36, .26, .17, .11, .09],
    [62, .04, .1, .3, .58, .84, .95, .94, .88, .72, .55, .37, .27, .18, .12, .1],
    [69, .03, .08, .26, .5, .72, .84, .88, .83, .7, .55, .38, .28, .19, .12, .1],
    [83, .03, .05, .18, .4, .6, .68, .75, .77, .68, .55, .39, .28, .19, .13, .11],
    [108, .02, .04, .12, .32, .52, .6, .66, .71, .65, .54, .38, .27, .19, .13, .11],
    [148, .02, .03, .07, .22, .44, .53, .58, .63, .6, .51, .36, .26, .18, .13, .11],
    [198, .01, .02, .05, .16, .33, .45, .51, .57, .55, .46, .33, .24, .16, .12, .1],
    [248, .01, .01, .04, .11, .28, .39, .46, .52, .5, .41, .3, .21, .15, .11, .09],
    [298, .01, .01, .03, .08, .24, .34, .42, .48, .45, .37, .28, .19, .14, .1, .09],
    [350, .01, .01, .02, .07, .2, .31, .38, .43, .41, .34, .26, .18, .13, .1, .08]
];

function colour(t) {
    t = Math.max(0, Math.min(1, t)) * 4;
    const f = t % 1;
    if (t < 1) return [0, 255 * f, 255];
    if (t < 2) return [0, 255, 255 * (1 - f)];
    if (t < 3) return [255 * f, 255, 0];
    return [255, t >= 4 ? 0 : 255 * (1 - f), 0];
}

function css(t) {
    return 'rgb(' + colour(t).map(Math.round).join(',') + ')';
}

function drawHeatmap() {
    const ctx = document.getElementById('heatmap').getContext('2d');
    const stripes = [];
    for (let x = 0; x < 409; x += 2) stripes.push((rnd() - .5) * .012);
    for (let y = 0; y < 350; y += 4) {
        let r = 1;
        while (r < rows.length - 1 && rows[r][0] < y) r++;
        const a = rows[r - 1], b = rows[r];
        const f = (y - a[0]) / (b[0] - a[0]);
        const profile = cols.map((c, i) => [c, a[i + 1] + f * (b[i + 1] - a[i + 1])]);
        for (let x = 0; x < 409; x += 2) {
            // averaging neighbours rounds off the corners of the profile
            const v = (lookup(profile, Math.max(0, x - 8)) + lookup(profile, x) + lookup(profile, x + 8)) / 3;
            const noise = (rnd() - .5) * (.012 + v * .035) + stripes[x / 2] * Math.min(1, v * 4);
            ctx.fillStyle = css(v + noise);
            ctx.fillRect(x, y, 2, 4);
        }
    }
    ctx.fillStyle = '#00f5c0';
    ctx.fillRect(385, 148, 5, 5);
    ctx.fillRect(376, 201, 2, 4);
    ctx.fillRect(287, 109, 3, 4);
    ctx.fillStyle = '#c0ff00';
    ctx.fillRect(135, 188, 2, 4);
}
drawHeatmap();

const lines = document.getElementById('heat-lines');
trace(lines, '92,373 128,373 134,361 276,361 283,346 430,346 437,334 585,334 592,319 740,319 745,307 896,307 902,295 1054,295 1060,281 1215,281 1220,268 1314,268', -30, -72);
add(lines, 'path', { d: 'M0 69.5h409', stroke: '#7a7a7a' });
add(lines, 'path', { d: 'M112.5 0v350', stroke: '#f00' });
add(lines, 'path', { d: 'M0 .5h409', stroke: '#001a80' });

const heatY = document.getElementById('heat-y');
line(heatY, 'axis', 20, 0, 20, 349);
[8, 65, 122, 179, 236, 293, 349].forEach(y => line(heatY, 'axis', 18, y, 20, y));
vline(heatY, 14, 175, '← Time (ps)');

const heatX = document.getElementById('heat-x');
line(heatX, 'axis', 0, 3, 409, 3);
[0, 66, 133, 199, 266, 332, 399].forEach(x => line(heatX, 'axis', x, 3, x, 5));
label(heatX, 203, 19, 'Wavelength (nm) →', 'middle', 'name');

const bar = document.getElementById('colorbar');
for (let i = 0; i < 92; i++) {
    add(bar, 'rect', { x: 9, y: 2 + i * 4, width: 15, height: 4, fill: css(1 - i / 91) });
}
add(bar, 'path', { d: 'M9.5 370V2.500H24', fill: 'none', stroke: '#808080', 'stroke-opacity': .6 });
line(bar, 'zero', 24, 2, 24, 369);
for (let i = 0; i < 14; i++) {
    const y = Math.round(7 + i * 27.3);
    line(bar, 'zero', 25, y, 26, y);
    label(bar, 30, y + 4, 325 - i * 25, 'start', 'tiny');
}

// ---- Selected spectrum ----
const spectrum = document.getElementById('spectrum');
const wavesX = [78, 131, 185, 238, 292, 345, 399];
plot(spectrum, 46, 12, 362, 121, wavesX, [32, 52, 72, 92, 113]);
plot(spectrum, 46, 151, 362, 36, wavesX, []);
line(spectrum, 'axis', 42, 12, 42, 133);
line(spectrum, 'axis', 42, 151, 42, 187);
[300, 250, 200, 150, 100, 50, 0].forEach((v, i) => {
    const y = Math.round(12 + i * 20.2);
    line(spectrum, 'axis', 40, y, 42, y);
    label(spectrum, 36, y + 5, v, 'end');
});
line(spectrum, 'axis', 40, 169, 42, 169);
label(spectrum, 36, 174, '0', 'end');
line(spectrum, 'zero', 46, 169, 408, 169);
line(spectrum, 'axis', 42, 191, 412, 191);
[425, 450, 475, 500, 525, 550, 575].forEach((v, i) => {
    const x = Math.round(75 + i * 54.600);
    line(spectrum, 'axis', x, 191, x, 193);
    label(spectrum, x, 205, v, 'middle', 'small');
});
label(spectrum, 227, 223, 'Wavelength (nm)', 'middle', 'name');

const fit = parse('146,448 160,438 185,430 210,412 225,400 240,380 265,330 280,295 300,262 325,215 345,188 360,170 372,167 385,150 400,137 420,131 450,127 475,120 497,116 520,124 545,130 570,143 600,158 640,180 680,208 720,235 750,255 780,275 810,290 850,318 900,338 950,357 1000,377 1050,390 1100,402 1150,411 1200,419 1231,424');
const residual = '146,555 150,563 154,553 162,558 172,551 178,572 184,563 192,561 200,564 208,560 216,566 226,577 232,570 238,577 242,557 250,565 256,563 265,570 272,574 277,584 281,562 291,554 299,579 304,573 309,579 316,577 320,586 326,544 332,557 336,574 342,562 347,567 352,557 358,562 360,545 369,548 374,569 385,536 393,555 400,552 408,547 412,562 418,558 424,528 434,526 437,549 443,508 449,547 462,541 466,555 473,528 476,552 484,557 494,555 499,518 508,520 514,540 522,535 532,549 535,520 542,555 549,526 557,555 570,550 578,560 590,553 596,565 604,545 606,570 612,550 625,552 642,538 650,549 655,572 668,548 674,562 683,535 687,568 695,568 707,540 710,598 722,530 731,604 737,550 746,560 752,542 758,560 762,547 775,530 782,571 795,548 805,530 818,565 832,530 840,560 848,545 856,557 866,530 870,545 875,527 888,577 898,560 904,543 910,565 915,543 925,560 930,545 940,563 952,555 964,538 972,560 981,568 986,540 995,570 1004,545 1012,538 1018,572 1028,560 1042,538 1050,560 1058,538 1070,560 1076,543 1090,555 1102,545 1108,562 1114,541 1125,562 1130,532 1137,552 1144,543 1150,563 1154,542 1163,555 1172,566 1185,548 1197,548 1202,568 1210,545 1217,562 1231,552';
const measured = parse(residual).map(([x, y]) => x + ',' + Math.min(448, lookup(fit, x) + (y - 555) * .3));
trace(spectrum, fit.join(' '), -2, -16, 'red');
trace(spectrum, measured.join(' '), -2, -16);
trace(spectrum, residual, -2, -16);

// ---- Selected time trace ----
const timetrace = document.getElementById('timetrace');
const timesX = [60, 89, 118, 146, 175, 204, 232, 262, 289, 318, 347, 375, 404];
plot(timetrace, 46, 11, 362, 125, timesX, [22, 58, 94]);
plot(timetrace, 46, 149, 362, 37, timesX, []);
line(timetrace, 'axis', 42, 11, 42, 136);
line(timetrace, 'axis', 42, 149, 42, 186);
line(timetrace, 'zero', 46, 130, 408, 130);
line(timetrace, 'zero', 46, 168, 408, 168);
[[300, 22], [200, 58], [100, 94], [0, 130], [0, 168]].forEach(([v, y]) => {
    line(timetrace, 'axis', 40, y, 42, y);
    label(timetrace, 36, y + 5, v, 'end');
});
line(timetrace, 'axis', 42, 190, 412, 190);
for (let i = 0; i < 13; i++) {
    const x = Math.round(57 + i * 29.25);
    line(timetrace, 'axis', x, 190, x, 192);
    label(timetrace, x, 204, (3 + i * .25).toFixed(2), 'middle', 'small');
}
label(timetrace, 227, 222, 'Time', 'middle', 'name');
trace(timetrace, '146,409 185,405 205,395 226,354 253,250 281,125 295,90 308,73 322,73 349,108 392,150 420,167 447,178 500,197 556,211 610,223 668,235 750,248 802,257 900,269 950,276 1020,283 1090,291 1150,296 1231,302', -2, -6, 'red');
trace(timetrace, '146,409 158,412 172,409 185,403 200,402 212,380 226,352 240,307 253,259 267,184 281,107 295,80 308,79 322,68 335,90 349,101 363,118 376,142 392,149 406,172 420,173 434,175 447,181 461,182 486,199 505,203 542,211 556,209 571,219 585,217 598,219 610,230 624,229 638,235 652,230 668,230 680,240 722,250 736,242 750,252 764,259 777,257 790,262 802,254 833,257 845,265 872,268 887,265 898,271 915,271 930,268 942,274 955,275 968,283 982,283 996,278 1010,277 1036,286 1050,298 1068,295 1078,290 1093,286 1105,295 1120,301 1133,294 1147,286 1160,295 1174,295 1190,302 1203,298 1215,300 1231,307', -2, -6);
trace(timetrace, '146,520 158,526 172,524 185,517 200,535 212,508 226,523 241,508 254,571 268,533 281,472 295,490 308,544 322,499 338,535 349,505 364,511 376,547 391,522 406,571 418,538 434,523 447,532 461,511 472,530 488,535 515,539 530,532 542,532 556,508 571,539 584,515 598,520 610,544 625,530 638,541 654,517 668,499 680,535 695,536 708,544 722,547 736,499 748,530 763,553 776,535 791,544 802,509 818,511 833,505 845,527 860,520 871,532 886,515 899,526 914,523 929,508 940,520 955,512 967,544 983,535 997,510 1010,505 1022,512 1036,525 1051,562 1067,544 1093,499 1106,530 1120,544 1133,520 1147,490 1162,511 1175,512 1190,523 1202,511 1218,523 1231,533', -2, -6);

// ---- Left singular vectors ----
const left = document.getElementById('left-svd');
label(left, 178, 15, 'Left singular vectors', 'middle', 'title');
plot(left, 50, 21, 293, 107, [62, 108, 154, 201, 247, 293, 340], [29, 69, 89, 109]);
line(left, 'zero', 50, 49, 343, 49);
['0.25', '0.00', '-0.25', '-0.50', '-0.75'].forEach((v, i) => {
    line(left, 'axis', 48, 29 + i * 20, 50, 29 + i * 20);
    label(left, 44, 33 + i * 20, v, 'end');
});
['3.0', '3.5', '4.0', '4.5', '5.0', '5.5', '6.0'].forEach((v, i) => {
    const x = Math.round(62 + i * 46.300);
    line(left, 'axis', x, 129, x, 131);
    label(left, x, 141, v, 'middle');
});
label(left, 196, 157, 'Time', 'middle', 'bold');
trace(left, '176,212 185,203 196,211 208,203 220,207 230,225 242,233 250,249 263,157 275,215 287,259 298,238 308,231 320,202 329,235 343,233 353,225 365,181 374,211 386,176 398,211 407,241 419,250 430,218 439,169 452,169 463,142 474,154 484,169 497,169 508,187 518,142 530,178 541,184 553,197 562,215 574,218 586,231 596,223 607,233 619,212 631,163 641,175 653,229 664,206 676,205 687,221 698,211 710,235 719,210 731,207 743,222 752,206 764,231 776,220 784,190 797,202 809,231 821,247 831,219 842,222 854,199 863,238 875,253 887,211 898,211 908,172 920,183 932,229 953,193 965,215 976,224 985,253 998,235 1010,237 1019,253 1030,236 1042,238 1054,231', -8, -21);
trace(left, '176,213 185,208 197,230 210,224 218,232 240,220 260,217 275,220 287,205 310,211 320,213 330,229 341,220 353,235 365,214 378,216 400,211 420,220 440,219 452,206 463,213 485,218 495,214 508,223 520,214 530,212 541,217 553,433 563,217 575,217 590,219 610,213 640,217 655,220 676,213 686,229 698,208 710,210 742,226 755,217 776,229 785,211 800,221 812,217 830,229 855,212 870,218 908,224 930,215 955,217 985,222 998,212 1010,214 1019,229 1030,221 1045,223 1054,217', -8, -21, 'red');

// ---- Scree plot ----
const scree = document.getElementById('scree');
label(scree, 118, 15, 'Screeplot', 'middle', 'tiny');
plot(scree, 47, 21, 187, 107, [68, 88, 110, 130, 151, 172, 192, 213], [37, 55, 72, 90, 107, 124]);
['10^2.3', '10^2.2', '10^2.1', '10^2.0', '10^1.9', '10^1.8'].forEach((v, i) => {
    const y = Math.round(38 + i * 17.3);
    line(scree, 'axis', 45, y, 47, y);
    label(scree, 43, y + 3, v, 'end', 'tiny power');
});
const values = [[47, 26], [68, 70], [88.5, 76.5], [110, 88.5], [130.5, 95.5], [151.5, 109], [172.5, 112.5], [192.5, 117], [213.5, 121.5], [234, 123.5]];
add(scree, 'polyline', { class: 'trace', points: values.join(' ') });
values.forEach(([x, y], i) => {
    add(scree, 'circle', { class: 'dot', cx: x, cy: y, r: 3.500 });
    const tick = Math.round(47 + i * 20.800);
    line(scree, 'axis', tick, 129, tick, 131);
    label(scree, tick, 141, i + 1, 'middle', 'tiny');
});
vline(scree, 14, 71, 'Log(SVn)');
label(scree, 140, 157, 'Singular Value Index (n)', 'middle', 'title');

// ---- Right singular vectors ----
const right = document.getElementById('right-svd');
label(right, 173, 15, 'Right singular vectors', 'middle', 'title');
plot(right, 39, 21, 300, 107, [65, 110, 154, 198, 243, 287, 331], [74, 106]);
line(right, 'zero', 39, 42, 339, 42);
['0.00', '-0.25', '-0.50'].forEach((v, i) => {
    line(right, 'axis', 37, 42 + i * 32, 39, 42 + i * 32);
    label(right, 32, 46 + i * 32, v, 'end');
});
[425, 450, 475, 500, 525, 550, 575].forEach((v, i) => {
    const x = Math.round(65 + i * 44.300);
    line(right, 'axis', x, 129, x, 131);
    label(right, x, 141, v, 'middle');
});
label(right, 189, 157, 'Wavelength (nm)', 'middle', 'bold');

const base = parse('521,192 560,196 620,204 680,210 740,218 800,226 860,230 920,232 980,224 1040,220 1100,210 1160,206 1240,202 1320,196 1420,192');
const black = [], red = [];
for (let x = 521; x <= 1420; x += 4) {
    black.push(x + ',' + (lookup(base, x) + (rnd() - .5) * 18));
    if (x < 1368 || x > 1388) red.push([x, 187 + (rnd() - .5) * 42]);
    else if (x < 1372) red.push([1368, 190], [1372, 330], [1379, 345], [1382, 434], [1386, 190]);
}
[[560, 159], [822, 218], [926, 236], [989, 147], [1013, 152], [1078, 157], [1135, 141], [1214, 156]].forEach(([x, y]) => {
    red.find(p => p[0] >= x)[1] = y;
});
trace(right, black.join(' '), -134, -21);
trace(right, red.join(' '), -134, -21, 'red');
```
